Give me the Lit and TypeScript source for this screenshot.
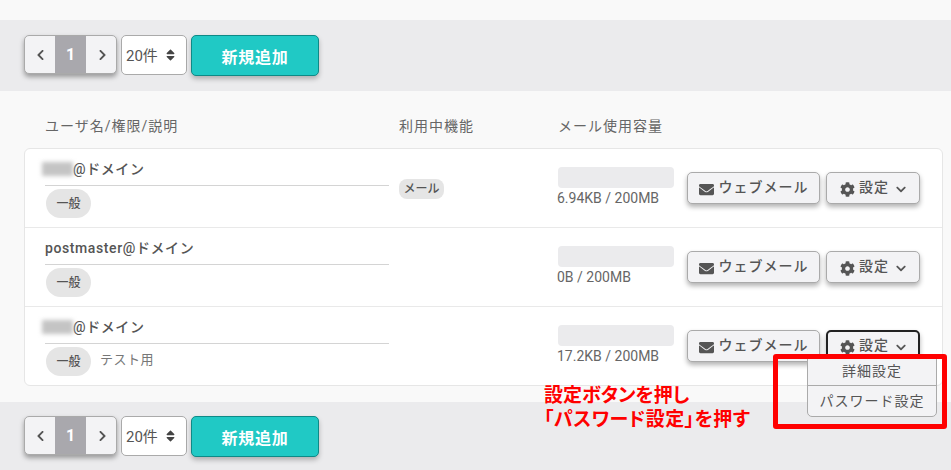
import { LitElement, html, css, svg } from "lit";
import { customElement } from "lit/decorators.js";

const icon = (vb: string, d: string, cls: string) =>
  html`<svg class=${cls} viewBox=${vb} aria-hidden="true">${svg`<path fill="currentColor" d=${d}></path>`}</svg>`;
const LEFT = "M34.52 239.03L228.87 44.69c9.37-9.37 24.57-9.37 33.94 0l22.67 22.67c9.36 9.36 9.37 24.52.04 33.9L131.49 256l154.02 154.75c9.34 9.38 9.32 24.54-.04 33.9l-22.67 22.67c-9.37 9.37-24.57 9.37-33.94 0L34.52 272.97c-9.37-9.37-9.37-24.57 0-33.94z";
const RIGHT = "M285.476 272.971L91.132 467.314c-9.373 9.373-24.569 9.373-33.941 0l-22.667-22.667c-9.357-9.357-9.375-24.522-.04-33.901L188.505 256 34.484 101.255c-9.335-9.379-9.317-24.544.04-33.901l22.667-22.667c9.373-9.373 24.569-9.373 33.941 0L285.475 239.03c9.373 9.372 9.373 24.568.001 33.941z";
const SORT = "M41 288h238c21.4 0 32.1 25.9 17 41L177 448c-9.4 9.4-24.6 9.4-33.9 0L24 329c-15.1-15.1-4.4-41 17-41zm255-105L177 64c-9.4-9.4-24.6-9.4-33.9 0L24 183c-15.1 15.1-4.4 41 17 41h238c21.4 0 32.1-25.9 17-41z";
const DOWN = "M207.029 381.476L12.686 187.132c-9.373-9.373-9.373-24.569 0-33.941l22.667-22.667c9.357-9.357 24.522-9.375 33.901-.04L224 284.505l154.745-154.021c9.379-9.335 24.544-9.317 33.901.04l22.667 22.667c9.373 9.373 9.373 24.569 0 33.941L240.971 381.476c-9.373 9.372-24.569 9.372-33.942 0z";
const MAIL = "M502.3 190.8c3.9-3.1 9.7-.2 9.7 4.7V400c0 26.5-21.5 48-48 48H48c-26.5 0-48-21.5-48-48V195.6c0-5 5.7-7.8 9.7-4.7 22.4 17.4 52.1 39.5 154.1 113.6 21.1 15.4 56.7 47.8 92.2 47.6 35.7.3 72-32.8 92.3-47.6 102-74.1 131.6-96.3 154-113.7zM256 320c23.2.4 56.6-29.2 73.4-41.4 132.7-96.3 142.8-104.7 173.4-128.7 5.8-4.5 9.2-11.5 9.2-18.9v-19c0-26.5-21.5-48-48-48H48C21.5 64 0 85.5 0 112v19c0 7.4 3.4 14.3 9.2 18.9 30.6 23.9 40.7 32.4 173.4 128.7 16.8 12.2 50.2 41.8 73.4 41.4z";
const COG = "M487.4 315.7l-42.6-24.6c4.3-23.2 4.3-47 0-70.2l42.6-24.6c4.9-2.8 7.1-8.6 5.5-14-11.1-35.6-30-67.8-54.7-94.6-3.8-4.1-10-5.1-14.8-2.3L380.8 110c-17.9-15.4-38.5-27.3-60.8-35.1V25.8c0-5.6-3.9-10.5-9.4-11.7-36.7-8.2-74.3-7.8-109.2 0-5.5 1.2-9.4 6.1-9.4 11.7V75c-22.2 7.9-42.8 19.8-60.8 35.1L88.7 85.5c-4.9-2.8-11-1.9-14.8 2.3-24.7 26.7-43.6 58.9-54.7 94.6-1.7 5.4.6 11.2 5.5 14L67.3 221c-4.3 23.2-4.3 47 0 70.2l-42.6 24.6c-4.9 2.8-7.1 8.6-5.5 14 11.1 35.6 30 67.8 54.7 94.6 3.8 4.1 10 5.1 14.8 2.3l42.6-24.6c17.9 15.4 38.5 27.3 60.8 35.1v49.2c0 5.6 3.9 10.5 9.4 11.7 36.7 8.2 74.3 7.8 109.2 0 5.5-1.2 9.4-6.1 9.4-11.7v-49.2c22.2-7.9 42.8-19.8 60.8-35.1l42.6 24.6c4.9 2.8 11 1.9 14.8-2.3 24.7-26.7 43.6-58.9 54.7-94.6 1.5-5.5-.7-11.3-5.6-14.1zM256 336c-44.1 0-80-35.9-80-80s35.9-80 80-80 80 35.9 80 80-35.9 80-80 80z";

interface Row { blur: number; name: string; note?: string; feature?: string; usage: string; open?: boolean; }
const ROWS: Row[] = [
  { blur: 31, name: "@ドメイン", feature: "メール", usage: "6.94KB / 200MB" },
  { blur: 0, name: "postmaster@ドメイン", usage: "0B / 200MB" },
  { blur: 31, name: "@ドメイン", note: "テスト用", usage: "17.2KB / 200MB", open: true },
];

@customElement("app-root")
export class AppRoot extends LitElement {
  static styles = css`
    :host {
      display: block; position: relative; height: 470px; overflow: hidden;
      background: #f9f9f9; color: #555;
      font-family: "Roboto", "Noto Sans CJK JP", sans-serif; font-size: 14px;
    }
    .top { height: 20px; }
    .bar { background: #ebebed; display: flex; align-items: flex-start; gap: 4px; padding: 15px 24px 0; height: 71px; box-sizing: border-box; }
    .bar.bottom { padding-top: 14px; height: 68px; }
    .pager { display: flex; width: 93px; height: 39px; box-sizing: border-box; border: 1px solid #aaa; border-radius: 5px; overflow: hidden; background: #f3f3f5; box-shadow: 0 3px 5px rgba(0,0,0,.35); }
    .pg { width: 30px; display: flex; align-items: center; justify-content: center; color: #555; }
    .pg.cur { width: 32px; background: #a9a8ad; color: #fff; font-weight: 700; font-size: 16px; }
    .pg svg { width: 9px; height: 12px; margin-left: 2px; }
    .sel { width: 66px; height: 40px; box-sizing: border-box; border: 1px solid #aaa; border-radius: 5px; background: #fff; display: flex; align-items: center; justify-content: space-between; padding: 0 11px 0 4px; font-size: 15px; color: #555; }
    .sel span { margin-bottom: 2px; }
    .sel svg { width: 9px; height: 14px; color: #444; }
    .add { width: 128px; height: 41px; box-sizing: border-box; background: #20c9c5; border: 1px solid #0e8a87; border-radius: 5px; color: #fff; font-weight: 700; font-size: 16px; letter-spacing: .8px; display: flex; align-items: center; justify-content: center; box-shadow: 0 3px 5px rgba(0,0,0,.25); }
    .main { height: 311px; padding: 0 8px 0 24px; box-sizing: border-box; }
    .grid { display: grid; grid-template-columns: 374px 159px 129px 1fr; }
    .head { height: 57px; align-items: end; color: #666; padding: 0 1px 13px; box-sizing: border-box; letter-spacing: 1px; }
    .head div:first-child { padding-left: 20px; }
    .card { background: #fff; border: 1px solid #e6e6e6; border-radius: 6px; height: 238px; box-sizing: border-box; }
    .row { height: 79px; box-sizing: border-box; border-bottom: 1px solid #e9e9e9; align-items: center; }
    .row:last-child { border-bottom-color: transparent; }
    .who { padding: 0 10px 0 20px; align-self: start; }
    .name { height: 37px; padding-top: 8px; line-height: 24px; border-bottom: 1px solid #d4d4d4; font-weight: 500; color: #555; letter-spacing: .6px; box-sizing: border-box; display: flex; }
    .blur { display: inline-block; height: 14px; margin: 5px 0 0 -3px; background: #c4c4c4; filter: blur(2px); }
    .sub { display: flex; align-items: center; gap: 9px; margin-top: 3px; }
    .pill { width: 45px; height: 29px; padding-bottom: 2px; box-sizing: border-box; margin-left: 1px; border-radius: 15px; background: #e5e5e5; font-size: 12px; font-weight: 500; display: flex; align-items: center; justify-content: center; color: #555; }
    .note { font-size: 13px; color: #777; letter-spacing: .5px; margin-bottom: 6px; }
    .tag { display: block; width: fit-content; margin-top: 2px; font-size: 12px; font-weight: 500; background: #e5e5e5; border-radius: 8px; padding: 0 4.5px; line-height: 20px; }
    .use { padding-bottom: 2px; }
    .bar-empty { width: 116px; height: 21px; background: #ebebed; border-radius: 4px; }
    .usage { font-size: 14px; color: #666; margin-top: 1px; line-height: 18px; margin-left: -1px; }
    .acts { display: flex; gap: 6px; align-items: center; }
    .btn { height: 32px; box-sizing: border-box; border: 1px solid #aaa; border-radius: 5px; background: #f3f3f5; color: #555; display: flex; align-items: center; justify-content: center; font-weight: 500; letter-spacing: 1px; box-shadow: 0 3px 5px rgba(0,0,0,.3); }
    .btn span { margin-bottom: 4px; }
    .mail { width: 133px; gap: 5px; }
    .mail svg { width: 15px; height: 15px; margin-top: 2px; }
    .cfg { width: 94px; gap: 4px; }
    .cfg .c { width: 15px; height: 15px; margin-top: 2px; }
    .cfg .d { width: 10px; height: 11px; margin: 3px 0 0 3px; }
    .cfg.open { border: 2px solid #222; }
    .menu { position: absolute; left: 807px; top: 355px; width: 130px; height: 62px; box-sizing: border-box; background: #f3f3f5; border: 1px solid #aaa; border-radius: 0 0 5px 5px; font-size: 14px; letter-spacing: 1px; }
    .menu div { height: 29px; padding-bottom: 2px; box-sizing: border-box; display: flex; align-items: center; justify-content: center; }
    .menu div + div { border-top: 1px solid #aaa; height: 31px; padding: 0 0 3px; }
    .redbox { position: absolute; left: 773px; top: 354px; width: 174px; height: 75px; box-sizing: border-box; border: 5px solid #f00; border-radius: 3px; }
    .redtext { position: absolute; left: 544px; top: 384px; color: #f00; font-weight: 700; font-size: 19px; line-height: 24px; font-feature-settings: "palt"; white-space: nowrap; }
    .redtext .l2 { letter-spacing: .45px; }
  `;

  private bar(bottom = false) {
    return html`<div class="bar ${bottom ? "bottom" : ""}">
      <div class="pager">
        <div class="pg">${icon("0 0 320 512", LEFT, "")}</div>
        <div class="pg cur">1</div>
        <div class="pg">${icon("0 0 320 512", RIGHT, "")}</div>
      </div>
      <div class="sel"><span>20件</span>${icon("0 0 320 512", SORT, "")}</div>
      <div class="add">新規追加</div>
    </div>`;
  }

  render() {
    return html`
      <div class="top"></div>
      ${this.bar()}
      <div class="main">
        <div class="grid head">
          <div>ユーザ名/権限/説明</div><div>利用中機能</div><div>メール使用容量</div><div></div>
        </div>
        <div class="card">
          ${ROWS.map((r) => html`<div class="grid row">
            <div class="who">
              <div class="name">${r.blur ? html`<span class="blur" style="width:${r.blur}px"></span>` : ""}<span>${r.name}</span></div>
              <div class="sub"><span class="pill">一般</span>${r.note ? html`<span class="note">${r.note}</span>` : ""}</div>
            </div>
            <div>${r.feature ? html`<span class="tag">${r.feature}</span>` : ""}</div>
            <div class="use"><div class="bar-empty"></div><div class="usage">${r.usage}</div></div>
            <div class="acts">
              <div class="btn mail">${icon("0 0 512 512", MAIL, "")}<span>ウェブメール</span></div>
              <div class="btn cfg ${r.open ? "open" : ""}">${icon("0 0 512 512", COG, "c")}<span>設定</span>${icon("0 0 448 512", DOWN, "d")}</div>
            </div>
          </div>`)}
        </div>
      </div>
      ${this.bar(true)}
      <div class="menu"><div>詳細設定</div><div>パスワード設定</div></div>
      <div class="redbox"></div>
      <div class="redtext">設定ボタンを押し<br /><span class="l2">「パスワード設定」を押す</span></div>
    `;
  }
}
